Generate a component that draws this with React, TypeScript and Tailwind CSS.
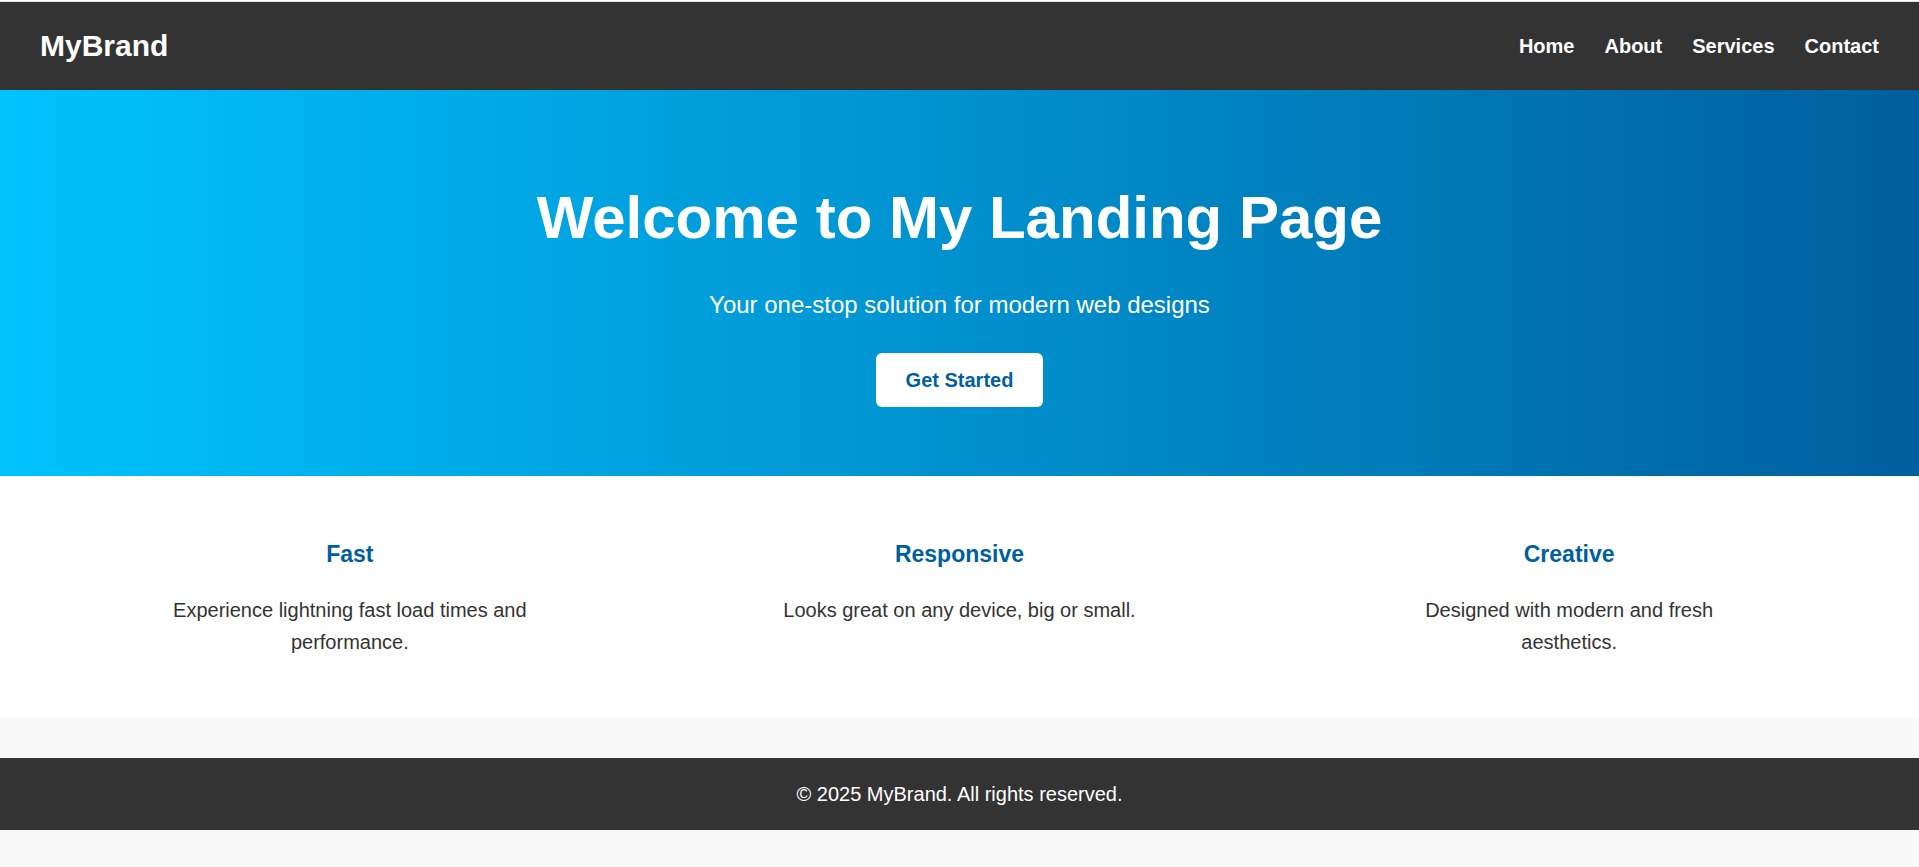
const links = ["Home", "About", "Services", "Contact"];

const features = [
  { title: "Fast", text: "Experience lightning fast load times and performance." },
  { title: "Responsive", text: "Looks great on any device, big or small." },
  { title: "Creative", text: "Designed with modern and fresh aesthetics." },
];

export default function App() {
  return (
    <div className="min-h-screen bg-[#f9f9f9] font-['Liberation_Sans',Arial,sans-serif] text-[20px] leading-8 text-[#333]">
      <div className="h-0.5 border-b border-[#dee1e6] bg-white" />
      <header className="flex items-center justify-between bg-[#333] px-10 py-5 text-white">
        <div className="text-[30px] leading-12 font-bold">MyBrand</div>
        <nav>
          <ul className="flex gap-[30px]">
            {links.map((link) => (
              <li key={link}>
                <a href={`#${link.toLowerCase()}`} className="font-bold">
                  {link}
                </a>
              </li>
            ))}
          </ul>
        </nav>
      </header>

      <section className="bg-linear-to-r/srgb from-[#00c3ff] to-[#005f9e] px-5 pt-20 pb-[69px] text-center text-white">
        <h1 className="mb-5 text-[60px] leading-24 font-bold">Welcome to My Landing Page</h1>
        <p className="mb-[29px] text-[24px] leading-[38px]">Your one-stop solution for modern web designs</p>
        <a
          href="#services"
          className="inline-block rounded-[6px] bg-white px-[30px] py-[11px] font-bold text-[#005f9e]"
        >
          Get Started
        </a>
      </section>

      <section id="services" className="flex flex-wrap justify-around bg-white px-[45px] py-[60px] text-center">
        {features.map((feature) => (
          <article key={feature.title} className="w-[375px]">
            <h3 className="mb-[22px] text-[23px] leading-9 font-bold text-[#005f9e]">{feature.title}</h3>
            <p>{feature.text}</p>
          </article>
        ))}
      </section>

      <footer className="mt-10 bg-[#333] p-5 text-center text-white">
        <p>© 2025 MyBrand. All rights reserved.</p>
      </footer>
    </div>
  );
}
